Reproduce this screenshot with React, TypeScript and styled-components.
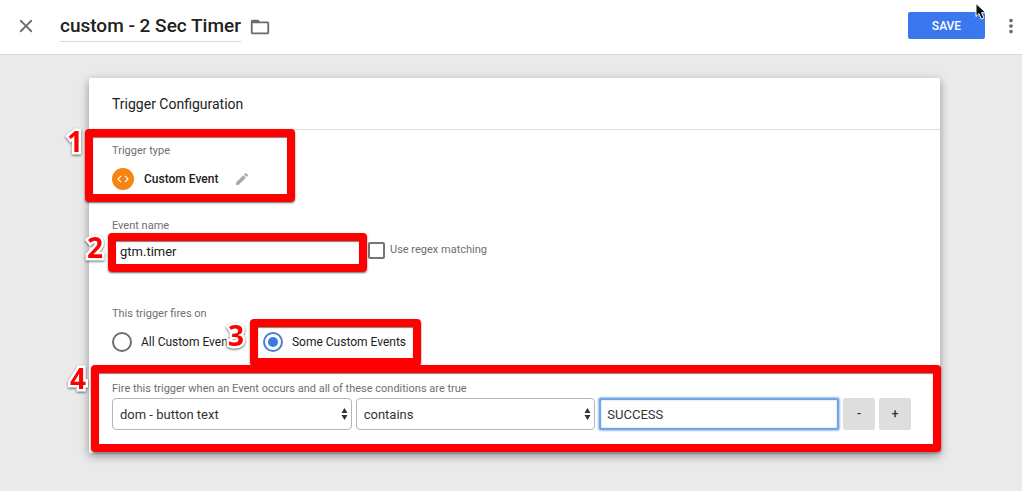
import React from "react";
import styled, { createGlobalStyle, css } from "styled-components";
import { MdClose, MdCode, MdEdit, MdFolderOpen, MdMoreVert } from "react-icons/md";

const GlobalStyle = createGlobalStyle`
  *, *::before, *::after { box-sizing: border-box; }
  body {
    margin: 0;
    background: #eaeaea;
    color: #212121;
    font-family: Roboto, "Liberation Sans", sans-serif;
    font-size: 12px;
    line-height: 16px;
  }
  button, input, select { font-family: inherit; }
`;

const Header = styled.header`
  position: relative;
  display: flex;
  align-items: center;
  height: 55px;
  padding: 0 0 3px 15px;
  background: #fff;
  border-bottom: 1px solid #d8d8d8;
`;

const IconButton = styled.button<{ $color?: string }>`
  display: flex;
  padding: 0;
  border: 0;
  background: none;
  color: ${(p) => p.$color ?? "#6b6b6b"};
  cursor: pointer;
`;

const FolderButton = styled(IconButton)`
  margin-top: 3px;
`;

const Title = styled.h1`
  margin: 4px 8px 0 23px;
  padding-bottom: 2px;
  border-bottom: 1px solid #d8d8d8;
  font-size: 19px;
  font-weight: 500;
  line-height: 26px;
`;

const Actions = styled.div`
  display: flex;
  align-items: center;
  gap: 15px;
  margin-left: auto;
`;

const SaveButton = styled.button`
  width: 77px;
  height: 27px;
  padding: 0;
  border: 0;
  border-radius: 2px;
  background: #3b78ef;
  color: #fff;
  font-size: 12px;
  font-weight: 500;
  cursor: pointer;
`;

const Pointer = styled.svg`
  position: absolute;
  top: 2px;
  right: 34px;
  pointer-events: none;
`;

const Card = styled.main`
  margin: 23px 82px 38px 89px;
  background: #fff;
  border-radius: 2px;
  box-shadow: 0 3px 10px rgba(0, 0, 0, 0.38);
`;

const CardTitle = styled.h2`
  margin: 0;
  padding: 16px 23px 15px;
  border-bottom: 1px solid #dedede;
  font-size: 14px;
  font-weight: 400;
  line-height: 20px;
`;

const CardBody = styled.div`
  display: flex;
  flex-direction: column;
  align-items: flex-start;
  padding: 13px 29px 23px 23px;
`;

const Group = styled.section<{ $gap: number; $after?: number; $wide?: boolean }>`
  position: relative;
  display: flex;
  flex-direction: column;
  gap: ${(p) => p.$gap}px;
  margin-bottom: ${(p) => p.$after ?? 0}px;
  ${(p) => p.$wide && css`align-self: stretch;`}
`;

const Caption = styled.label`
  color: #6f6f6f;
  font-size: 11px;
  line-height: 16px;
`;

const Row = styled.div<{ $gap?: number }>`
  display: flex;
  align-items: center;
  gap: ${(p) => p.$gap ?? 0}px;
`;

const TypeRow = styled(Row)`
  height: 24px;
  font-weight: 500;
`;

const TypeBadge = styled.span`
  display: grid;
  place-items: center;
  width: 22px;
  height: 22px;
  margin-right: 10px;
  border-radius: 50%;
  background: #f58413;
  color: #fff;
`;

const EditButton = styled(IconButton)`
  margin-left: 16px;
`;

const Field = styled.div`
  position: relative;
  flex: 0 0 251px;
`;

const TextInput = styled.input<{ $active?: boolean }>`
  display: block;
  width: 100%;
  height: 32px;
  padding: 0 7px;
  border: 1px solid #b5b5b5;
  border-radius: 4px;
  outline: 0;
  background: #fff;
  color: #212121;
  font-size: 13px;
  ${(p) =>
    p.$active &&
    css`
      padding: 0 6px;
      border: 2px solid #74a5e2;
      border-radius: 2px;
      color: #333;
      box-shadow: 0 0 2px 1px #9cc4f3, inset 0 0 2px #9cc4f3;
    `}
`;

const CheckLabel = styled.label`
  display: flex;
  align-items: center;
  gap: 5px;
  margin-left: 5px;
  padding-bottom: 2px;
  color: #6f6f6f;
  font-size: 11px;
`;

const Checkbox = styled.input`
  appearance: none;
  width: 17px;
  height: 17px;
  margin: 0;
  border: 2px solid #757575;
  border-radius: 2px;
`;

const Choice = styled.label`
  position: relative;
  display: flex;
  align-items: center;
  gap: 9px;
  height: 24px;
`;

const Radio = styled.input`
  appearance: none;
  display: grid;
  place-items: center;
  width: 20px;
  height: 20px;
  margin: 0;
  border: 2px solid #6e6e6e;
  border-radius: 50%;
  &:checked {
    border-color: #4a80cf;
  }
  &:checked::after {
    content: "";
    width: 10px;
    height: 10px;
    border-radius: 50%;
    background: #3b78e7;
  }
`;

const Conditions = styled.div`
  display: grid;
  grid-template-columns: 1fr 1fr 1fr 32px 32px;
  gap: 4px;
`;

const SelectBox = styled.div`
  position: relative;
`;

const Select = styled.select`
  appearance: none;
  display: block;
  width: 100%;
  height: 32px;
  padding: 0 20px 0 7px;
  border: 1px solid #b5b5b5;
  border-radius: 4px;
  background: #fff;
  color: #333;
  font-size: 13px;
`;

const SelectArrows = styled.svg`
  position: absolute;
  top: 10px;
  right: 4px;
  pointer-events: none;
`;

const SquareButton = styled.button`
  height: 32px;
  padding: 0;
  border: 0;
  border-radius: 2px;
  background: #dedede;
  color: #333;
  font-size: 12px;
  font-weight: 500;
`;

const Frame = styled.div<{ $inset: string }>`
  position: absolute;
  inset: ${(p) => p.$inset};
  border: 8px solid #fe0000;
  border-radius: 4px;
  box-shadow: 0 1px 2px rgba(0, 0, 0, 0.6), inset 0 1px 1px rgba(0, 0, 0, 0.5);
  pointer-events: none;
`;

const Step = styled.span<{ $top: number; $left: number }>`
  position: absolute;
  z-index: 1;
  top: ${(p) => p.$top}px;
  left: ${(p) => p.$left}px;
  color: #fe0000;
  font: 700 28px/28px "Open Sans", sans-serif;
  -webkit-text-stroke: 5px #fff;
  paint-order: stroke fill;
  filter: drop-shadow(0 1px 1px rgba(0, 0, 0, 0.6));
`;

interface CalloutProps {
  step: number;
  inset: string;
  top: number;
  left: number;
}

function Callout({ step, inset, top, left }: CalloutProps) {
  return (
    <Frame $inset={inset}>
      <Step $top={top} $left={left}>{step}</Step>
    </Frame>
  );
}

function DropDown({ id, label, value }: { id?: string; label: string; value: string }) {
  return (
    <SelectBox>
      <Select id={id} aria-label={label} defaultValue={value}>
        <option>{value}</option>
      </Select>
      <SelectArrows width="7" height="12" viewBox="0 0 7 12" fill="#333" aria-hidden="true">
        <path d="M3.5 0 6.5 5H.5zM3.5 12 .5 7h6z" />
      </SelectArrows>
    </SelectBox>
  );
}

export default function App() {
  return (
    <>
      <GlobalStyle />
      <Header>
        <IconButton aria-label="Close"><MdClose size={22} /></IconButton>
        <Title>custom - 2 Sec Timer</Title>
        <FolderButton aria-label="Move to folder"><MdFolderOpen size={22} /></FolderButton>
        <Actions>
          <SaveButton>SAVE</SaveButton>
          <IconButton aria-label="More options"><MdMoreVert size={22} /></IconButton>
        </Actions>
        <Pointer width="14" height="19" viewBox="0 0 14 19" aria-hidden="true">
          <path d="M2 1.5v13l3-2.8 2.3 5.3 2.6-1.1-2.3-5.2h4.2z" fill="#111" stroke="#fff" />
        </Pointer>
      </Header>

      <Card>
        <CardTitle>Trigger Configuration</CardTitle>
        <CardBody>
          <Group $gap={8} $after={27}>
            <Caption as="span">Trigger type</Caption>
            <TypeRow>
              <TypeBadge><MdCode size={14} /></TypeBadge>
              Custom Event
              <EditButton $color="#a8a8a8" aria-label="Edit trigger type"><MdEdit size={16} /></EditButton>
            </TypeRow>
            <Callout step={1} inset="-14px -45px -11px -27px" top={-10} left={-26} />
          </Group>

          <Group $gap={1} $after={39}>
            <Caption htmlFor="event-name">Event name</Caption>
            <Row>
              <Field>
                <TextInput id="event-name" defaultValue="gtm.timer" />
                <Callout step={2} inset="-2px -4px -5px" top={-8} left={-29} />
              </Field>
              <CheckLabel>
                <Checkbox type="checkbox" />
                Use regex matching
              </CheckLabel>
            </Row>
          </Group>

          <Group $gap={8} $after={27} role="radiogroup" aria-labelledby="fires-on">
            <Caption as="span" id="fires-on">This trigger fires on</Caption>
            <Row $gap={25}>
              <Choice>
                <Radio type="radio" name="fires" />
                All Custom Events
              </Choice>
              <Choice>
                <Radio type="radio" name="fires" defaultChecked />
                Some Custom Events
                <Callout step={3} inset="-11px -15px -12px -13px" top={-6} left={-30} />
              </Choice>
            </Row>
          </Group>

          <Group $gap={1} $wide>
            <Caption htmlFor="variable">
              Fire this trigger when an Event occurs and all of these conditions are true
            </Caption>
            <Conditions>
              <DropDown id="variable" label="Variable" value="dom - button text" />
              <DropDown label="Operator" value="contains" />
              <TextInput $active aria-label="Value" defaultValue="SUCCESS" />
              <SquareButton aria-label="Remove condition">-</SquareButton>
              <SquareButton aria-label="Add condition">+</SquareButton>
            </Conditions>
            <Callout step={4} inset="-16px -30px -22px -21px" top={-9} left={-29} />
          </Group>
        </CardBody>
      </Card>
    </>
  );
}
